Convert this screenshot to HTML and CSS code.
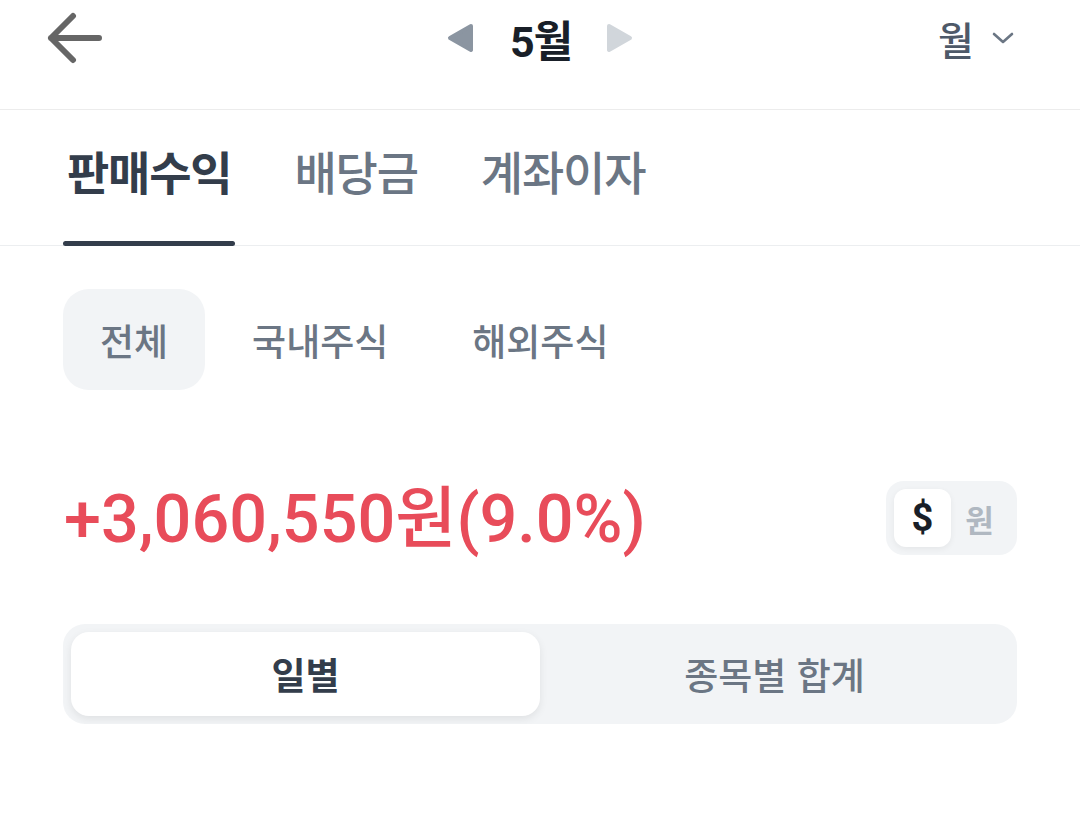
FILE: index.html
```html
<!DOCTYPE html>
<html lang="ko">
<head>
<meta charset="utf-8">
<title>판매수익</title>
<link rel="stylesheet" href="styles.css">
</head>
<body>
<header class="topbar">
  <div class="topbar-row">
    <div class="topbar-left">
      <svg class="back" width="60" height="52" viewBox="0 0 60 52" aria-label="뒤로">
        <path d="M27 4 L5 26 L27 48 M5 26 H53" fill="none" stroke="#666" stroke-width="6" stroke-linecap="round" stroke-linejoin="round"/>
      </svg>
    </div>
    <div class="month-nav">
      <svg class="tri" width="30" height="32" viewBox="0 0 30 32"><path d="M25 4 L4 16 L25 28 Z" fill="#8b95a1" stroke="#8b95a1" stroke-width="4" stroke-linejoin="round"/></svg>
      <span class="month">5월</span>
      <svg class="tri" width="30" height="32" viewBox="0 0 30 32"><path d="M5 4 L26 16 L5 28 Z" fill="#d1d6db" stroke="#d1d6db" stroke-width="4" stroke-linejoin="round"/></svg>
    </div>
    <div class="topbar-right">
      <span class="period">월</span>
      <svg width="22" height="14" viewBox="0 0 22 14"><path d="M2 3 L11 11 L20 3" fill="none" stroke="#6b7684" stroke-width="2.6" stroke-linecap="round" stroke-linejoin="round"/></svg>
    </div>
  </div>
</header>

<nav class="tabs">
  <div class="tab active"><span class="tab-label">판매수익</span><span class="tab-bar"></span></div>
  <div class="tab"><span class="tab-label">배당금</span><span class="tab-bar"></span></div>
  <div class="tab"><span class="tab-label">계좌이자</span><span class="tab-bar"></span></div>
</nav>

<div class="chips">
  <div class="chip selected">전체</div>
  <div class="chip">국내주식</div>
  <div class="chip">해외주식</div>
</div>

<section class="summary">
  <div class="amount">+3,060,550원(9.0%)</div>
  <div class="currency">
    <span class="cur on">$</span>
    <span class="cur">원</span>
  </div>
</section>

<div class="segment">
  <div class="seg on">일별</div>
  <div class="seg">종목별 합계</div>
</div>
</body>
</html>
```

FILE: styles.css
```css
* { box-sizing: border-box; }
html, body { margin: 0; padding: 0; background: #fff; }
body {
  font-family: Roboto, "Noto Sans CJK KR", sans-serif;
  color: #333d4b;
  width: 1080px;
}

.topbar {
  height: 110px;
  border-bottom: 1px solid #ececec;
}
.topbar-row {
  height: 76px;
  display: grid;
  grid-template-columns: 1fr auto 1fr;
  align-items: center;
}
.topbar-left { padding-left: 46px; display: flex; align-items: center; }
.back { display: block; }
.month-nav {
  display: flex;
  align-items: center;
}
.tri { display: block; }
.month {
  font-size: 43px;
  font-weight: 700;
  color: #191f28;
  margin: 0 32px 0 34px;
  letter-spacing: -1px;
}
.topbar-right {
  display: flex;
  justify-content: flex-end;
  align-items: center;
  gap: 18px;
  padding-right: 66px;
}
.period {
  font-family: "Noto Sans CJK KR", sans-serif;
  font-size: 39px;
  font-weight: 500;
  color: #4e5968;
}

.tabs {
  display: flex;
  gap: 55px;
  padding-left: 63px;
  border-bottom: 1px solid #eceef0;
  height: 136px;
}
.tab {
  display: flex;
  flex-direction: column;
  padding: 30px 0 0;
  margin-bottom: -1px;
}
.tab-label {
  font-family: "Noto Sans CJK KR", sans-serif;
  font-size: 46px;
  line-height: 60px;
  font-weight: 500;
  color: #6b7684;
  padding: 0 4px;
  letter-spacing: -1.2px;
}
.tab.active .tab-label { font-weight: 700; color: #333d4b; }
.tab-bar {
  margin-top: auto;
  height: 5px;
  border-radius: 3px;
  background: transparent;
}
.tab.active .tab-bar { background: #333d4b; }

.chips {
  display: flex;
  gap: 10px;
  padding-left: 63px;
  margin-top: 43px;
}
.chip {
  height: 101px;
  padding: 0 37px;
  display: flex;
  align-items: center;
  border-radius: 26px;
  font-family: "Noto Sans CJK KR", sans-serif;
  font-size: 37px;
  font-weight: 500;
  color: #6b7684;
}
.chip.selected { background: #f2f4f6; }

.summary {
  margin-top: 91px;
  height: 74px;
  padding: 0 63px 0 64px;
  display: flex;
  align-items: center;
  justify-content: space-between;
}
.amount {
  font-size: 66.5px;
  font-weight: 500;
  color: #e84c5a;
  padding-bottom: 10px;
}
.currency {
  display: flex;
  align-items: center;
  height: 74px;
  width: 131px;
  padding: 8px;
  border-radius: 18px;
  background: #f2f4f6;
}
.cur {
  width: 57px;
  height: 58px;
  display: flex;
  align-items: center;
  justify-content: center;
  font-family: "Noto Sans CJK KR", sans-serif;
  font-size: 31px;
  font-weight: 700;
  color: #b0b8c1;
  border-radius: 12px;
}
.cur.on {
  background: #fff;
  color: #191f28;
  font-family: Roboto, sans-serif;
  font-size: 38px;
  box-shadow: 0 2px 6px rgba(0,0,0,0.06);
}

.segment {
  margin: 69px 63px 0;
  height: 100px;
  padding: 8px;
  border-radius: 22px;
  background: #f2f4f6;
  display: grid;
  grid-template-columns: 1fr 1fr;
}
.seg {
  display: flex;
  align-items: center;
  justify-content: center;
  font-family: "Noto Sans CJK KR", sans-serif;
  font-size: 37px;
  font-weight: 500;
  color: #6b7684;
  border-radius: 18px;
}
.seg.on {
  background: #fff;
  color: #333d4b;
  font-weight: 700;
  box-shadow: 0 3px 8px rgba(0,0,0,0.08);
}
```
